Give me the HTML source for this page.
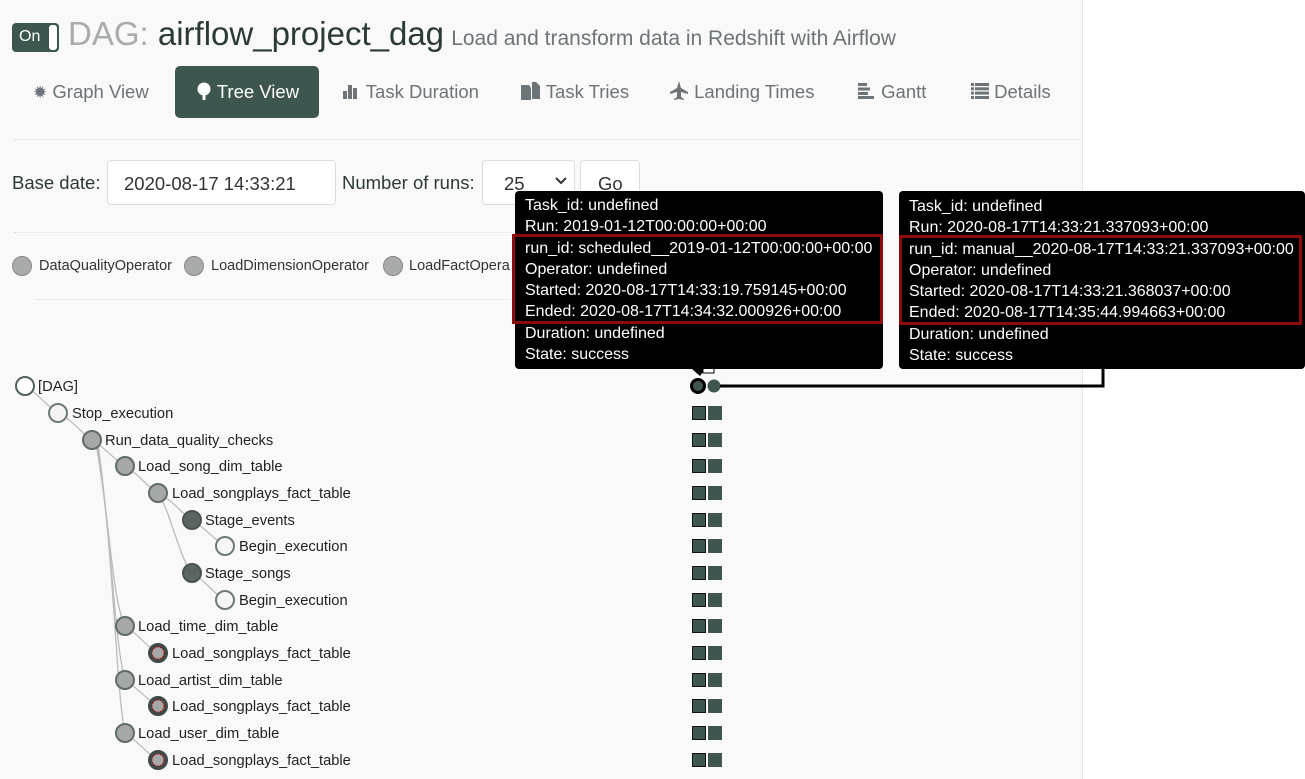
<!DOCTYPE html>
<html><head><meta charset="utf-8"><style>
*{margin:0;padding:0;box-sizing:border-box}
body{width:1305px;height:779px;overflow:hidden;background:#fff;font-family:"Liberation Sans",sans-serif;position:relative}
.main{position:absolute;left:0;top:0;width:1083px;height:779px;background:#f9f9f9;border-right:1px solid #e4e4e4}
.a{position:absolute;white-space:nowrap}
.tab{position:absolute;top:81px;font-size:18.5px;color:#6c7478}
.hr{position:absolute;border-top:1px dotted #ddd}
.tt{position:absolute;top:191px;height:178px;background:#000;border-radius:4px;color:#fff;font-size:16px}
.tt div{position:absolute;left:10px;white-space:nowrap;margin-top:1px}
.red{position:absolute;border:3px solid #8b0b0b}
.tree{position:absolute;font-size:14.7px;color:#222;white-space:nowrap;margin-top:2px}
.sq{position:absolute;width:14px;height:14px;background:#3f5650}
</style></head><body>
<div class="main"></div>
<div class="a" style="left:12px;top:23px;width:47px;height:29px;background:#3d5650;border-radius:4px"></div>
<div class="a" style="left:19px;top:28px;color:#fff;font-size:16px">On</div>
<div class="a" style="left:49px;top:25px;width:8px;height:25px;background:#fff;border-radius:3px"></div>
<div class="a" style="left:68px;top:15px;font-size:33px;color:#a8acab">DAG: <span style="color:#2b3a36">airflow_project_dag</span> <span style="font-size:21px;color:#6c7478;margin-left:-2px">Load and transform data in Redshift with Airflow</span></div>

<div class="tab" style="left:33px"><span style="font-size:17px">✹</span> Graph View</div>
<div class="a" style="left:175px;top:66px;width:144px;height:52px;background:#3d5650;border-radius:5px"></div>
<div class="tab" style="left:196px;color:#fff"><svg width="16" height="18" viewBox="0 0 16 18" style="vertical-align:-2px"><circle cx="8" cy="7" r="6.5" fill="#fff"/><rect x="6.5" y="10" width="3" height="8" fill="#fff"/></svg> Tree View</div>
<div class="tab" style="left:343px"><svg width="18" height="16" viewBox="0 0 18 16" style="vertical-align:-1px"><rect x="0" y="8" width="4" height="8" fill="#6c7478"/><rect x="5" y="2" width="4" height="14" fill="#6c7478"/><rect x="10" y="5" width="4" height="11" fill="#6c7478"/></svg> Task Duration</div>
<div class="tab" style="left:521px"><svg width="20" height="18" viewBox="0 0 20 18" style="vertical-align:-2px"><path d="M0 3h8l2 3v12H0z" fill="#6c7478"/><path d="M11 0h4l4 4v13h-8z" fill="#6c7478"/></svg> Task Tries</div>
<div class="tab" style="left:669px"><svg width="20" height="20" viewBox="0 0 20 20" style="vertical-align:-3px"><path d="M10 0l2 7 7 4v2l-7-2v5l3 2v1l-5-1-5 1v-1l3-2v-5l-7 2v-2l7-4z" fill="#6c7478"/></svg> Landing Times</div>
<div class="tab" style="left:858px"><svg width="18" height="16" viewBox="0 0 18 16" style="vertical-align:-1px"><rect y="0" width="9" height="3" fill="#6c7478"/><rect y="4.5" width="12" height="3" fill="#6c7478"/><rect y="9" width="10" height="3" fill="#6c7478"/><rect y="13" width="16" height="3" fill="#6c7478"/></svg> Gantt</div>
<div class="tab" style="left:971px"><svg width="18" height="16" viewBox="0 0 18 16" style="vertical-align:-1px"><g fill="#6c7478"><rect y="0" width="3" height="3"/><rect x="4" y="0" width="14" height="3"/><rect y="4.3" width="3" height="3"/><rect x="4" y="4.3" width="14" height="3"/><rect y="8.6" width="3" height="3"/><rect x="4" y="8.6" width="14" height="3"/><rect y="13" width="3" height="3"/><rect x="4" y="13" width="14" height="3"/></g></svg> Details</div>

<div class="hr" style="left:14px;top:139px;width:1066px"></div>
<div class="a" style="left:12px;top:172px;font-size:18.5px;color:#2b3a36">Base date:</div>
<div class="a" style="left:107px;top:160px;width:229px;height:45px;border:1px solid #ddd;border-radius:4px;background:#fff"></div>
<div class="a" style="left:124px;top:173px;font-size:18.5px;color:#333">2020-08-17 14:33:21</div>
<div class="a" style="left:342px;top:172px;font-size:18.5px;color:#2b3a36">Number of runs:</div>
<div class="a" style="left:482px;top:160px;width:93px;height:45px;border:1px solid #ddd;border-radius:4px;background:#fff"></div>
<div class="a" style="left:504px;top:173px;font-size:18.5px;color:#333">25</div>
<svg class="a" style="left:555px;top:177px" width="12" height="8"><path d="M1 1l5 5 5-5" fill="none" stroke="#333" stroke-width="2"/></svg>
<div class="a" style="left:580px;top:160px;width:60px;height:45px;border:1px solid #ddd;border-radius:4px;background:#fff"></div>
<div class="a" style="left:598px;top:173px;font-size:18.5px;color:#333">Go</div>
<div class="hr" style="left:14px;top:232px;width:500px"></div>

<div class="a" style="left:12px;top:256px;width:20px;height:20px;border-radius:50%;background:#a9abaa;border:1px solid #888"></div>
<div class="a" style="left:39px;top:258px;font-size:14.5px;color:#333">DataQualityOperator</div>
<div class="a" style="left:184px;top:256px;width:20px;height:20px;border-radius:50%;background:#a9abaa;border:1px solid #888"></div>
<div class="a" style="left:211px;top:258px;font-size:14.5px;color:#333">LoadDimensionOperator</div>
<div class="a" style="left:383px;top:256px;width:20px;height:20px;border-radius:50%;background:#a9abaa;border:1px solid #888"></div>
<div class="a" style="left:409px;top:258px;font-size:14.5px;color:#333">LoadFactOpera</div>
<div class="hr" style="left:36px;top:299px;width:480px"></div>

<svg class="a" style="left:0;top:0" width="1305" height="779">
<g fill="none" stroke="#bbb" stroke-width="1.3">
<path d="M25 386 C40 395,45 405,58 413"/>
<path d="M58 413 C75 422,80 432,92 440"/>
<path d="M92 440 C108 450,112 458,125 466"/>
<path d="M125 466 C140 475,145 485,158 493"/>
<path d="M158 493 C175 502,180 512,192 520"/>
<path d="M158 493 C170 510,180 560,192 573"/>
<path d="M192 520 C208 530,212 538,225 546"/>
<path d="M192 573 C208 583,212 592,225 600"/>
<path d="M96 444 C110 520,112 600,125 626"/>
<path d="M97 444 C112 540,114 640,125 680"/>
<path d="M98 444 C114 560,116 690,125 733"/>
<path d="M125 626 C140 636,145 645,158 653"/>
<path d="M125 680 C140 690,145 698,158 706"/>
<path d="M125 733 C140 743,145 752,158 760"/>
</g>
<g stroke-width="2">
<circle cx="25" cy="386" r="9" fill="#fff" stroke="#51605c"/>
<circle cx="58" cy="413" r="9" fill="#f4f4f4" stroke="#6d7a76"/>
<circle cx="92" cy="440" r="9" fill="#a6a8a7" stroke="#5f6c68"/>
<circle cx="125" cy="466" r="9" fill="#a6a8a7" stroke="#5f6c68"/>
<circle cx="158" cy="493" r="9" fill="#a6a8a7" stroke="#5f6c68"/>
<circle cx="192" cy="520" r="9" fill="#5b6561" stroke="#4a5350"/>
<circle cx="225" cy="546" r="9" fill="#f6f6f6" stroke="#6d7a76"/>
<circle cx="192" cy="573" r="9" fill="#5b6561" stroke="#4a5350"/>
<circle cx="225" cy="600" r="9" fill="#f6f6f6" stroke="#6d7a76"/>
<circle cx="125" cy="626" r="9" fill="#a6a8a7" stroke="#5f6c68"/>
<circle cx="125" cy="680" r="9" fill="#a6a8a7" stroke="#5f6c68"/>
<circle cx="125" cy="733" r="9" fill="#a6a8a7" stroke="#5f6c68"/>
</g>
<g fill="#a6a8a7" stroke="#3f4a47" stroke-width="4">
<circle cx="158" cy="653" r="8"/><circle cx="158" cy="706" r="8"/><circle cx="158" cy="760" r="8"/>
</g>
<g fill="none" stroke="#c00" stroke-width="1" stroke-dasharray="1.5 1.5">
<circle cx="158" cy="653" r="6"/><circle cx="158" cy="706" r="6"/><circle cx="158" cy="760" r="6"/>
</g>
<circle cx="698" cy="386" r="6.5" fill="#3f5650" stroke="#000" stroke-width="3"/>
<circle cx="714" cy="386" r="6.5" fill="#3f5650"/>
<path d="M720 386 H1103 V369" fill="none" stroke="#000" stroke-width="3"/>
<path d="M692 369 L700 376 L705 369z" fill="#000"/>
<rect x="703" y="366" width="11" height="7" fill="#fff" stroke="#000"/>
</svg>

<div class="tree" style="left:38px;top:377px">[DAG]</div>
<div class="tree" style="left:72px;top:404px">Stop_execution</div>
<div class="tree" style="left:105px;top:431px">Run_data_quality_checks</div>
<div class="tree" style="left:138px;top:457px">Load_song_dim_table</div>
<div class="tree" style="left:172px;top:484px">Load_songplays_fact_table</div>
<div class="tree" style="left:205px;top:511px">Stage_events</div>
<div class="tree" style="left:239px;top:537px">Begin_execution</div>
<div class="tree" style="left:205px;top:564px">Stage_songs</div>
<div class="tree" style="left:239px;top:591px">Begin_execution</div>
<div class="tree" style="left:138px;top:617px">Load_time_dim_table</div>
<div class="tree" style="left:172px;top:644px">Load_songplays_fact_table</div>
<div class="tree" style="left:138px;top:671px">Load_artist_dim_table</div>
<div class="tree" style="left:172px;top:697px">Load_songplays_fact_table</div>
<div class="tree" style="left:138px;top:724px">Load_user_dim_table</div>
<div class="tree" style="left:172px;top:751px">Load_songplays_fact_table</div>

<div class="sq" style="left:692px;top:406px;border:1px solid #111"></div><div class="sq" style="left:708px;top:406px"></div>
<div class="sq" style="left:692px;top:433px;border:1px solid #111"></div><div class="sq" style="left:708px;top:433px"></div>
<div class="sq" style="left:692px;top:459px;border:1px solid #111"></div><div class="sq" style="left:708px;top:459px"></div>
<div class="sq" style="left:692px;top:486px;border:1px solid #111"></div><div class="sq" style="left:708px;top:486px"></div>
<div class="sq" style="left:692px;top:513px;border:1px solid #111"></div><div class="sq" style="left:708px;top:513px"></div>
<div class="sq" style="left:692px;top:539px;border:1px solid #111"></div><div class="sq" style="left:708px;top:539px"></div>
<div class="sq" style="left:692px;top:566px;border:1px solid #111"></div><div class="sq" style="left:708px;top:566px"></div>
<div class="sq" style="left:692px;top:593px;border:1px solid #111"></div><div class="sq" style="left:708px;top:593px"></div>
<div class="sq" style="left:692px;top:619px;border:1px solid #111"></div><div class="sq" style="left:708px;top:619px"></div>
<div class="sq" style="left:692px;top:646px;border:1px solid #111"></div><div class="sq" style="left:708px;top:646px"></div>
<div class="sq" style="left:692px;top:673px;border:1px solid #111"></div><div class="sq" style="left:708px;top:673px"></div>
<div class="sq" style="left:692px;top:699px;border:1px solid #111"></div><div class="sq" style="left:708px;top:699px"></div>
<div class="sq" style="left:692px;top:726px;border:1px solid #111"></div><div class="sq" style="left:708px;top:726px"></div>
<div class="sq" style="left:692px;top:753px;border:1px solid #111"></div><div class="sq" style="left:708px;top:753px"></div>

<div class="tt" style="left:515px;width:368px">
<div style="top:5px">Task_id: undefined</div>
<div style="top:26px">Run: 2019-01-12T00:00:00+00:00</div>
<div style="top:48px">run_id: scheduled__2019-01-12T00:00:00+00:00</div>
<div style="top:69px">Operator: undefined</div>
<div style="top:90px">Started: 2020-08-17T14:33:19.759145+00:00</div>
<div style="top:111px">Ended: 2020-08-17T14:34:32.000926+00:00</div>
<div style="top:133px">Duration: undefined</div>
<div style="top:154px">State: success</div>
</div>
<div class="red" style="left:512px;top:234px;width:371px;height:90px"></div>
<div class="tt" style="left:899px;width:406px">
<div style="top:6px">Task_id: undefined</div>
<div style="top:27px">Run: 2020-08-17T14:33:21.337093+00:00</div>
<div style="top:49px">run_id: manual__2020-08-17T14:33:21.337093+00:00</div>
<div style="top:70px">Operator: undefined</div>
<div style="top:91px">Started: 2020-08-17T14:33:21.368037+00:00</div>
<div style="top:112px">Ended: 2020-08-17T14:35:44.994663+00:00</div>
<div style="top:134px">Duration: undefined</div>
<div style="top:155px">State: success</div>
</div>
<div class="red" style="left:899px;top:235px;width:403px;height:90px"></div>
</body></html>
